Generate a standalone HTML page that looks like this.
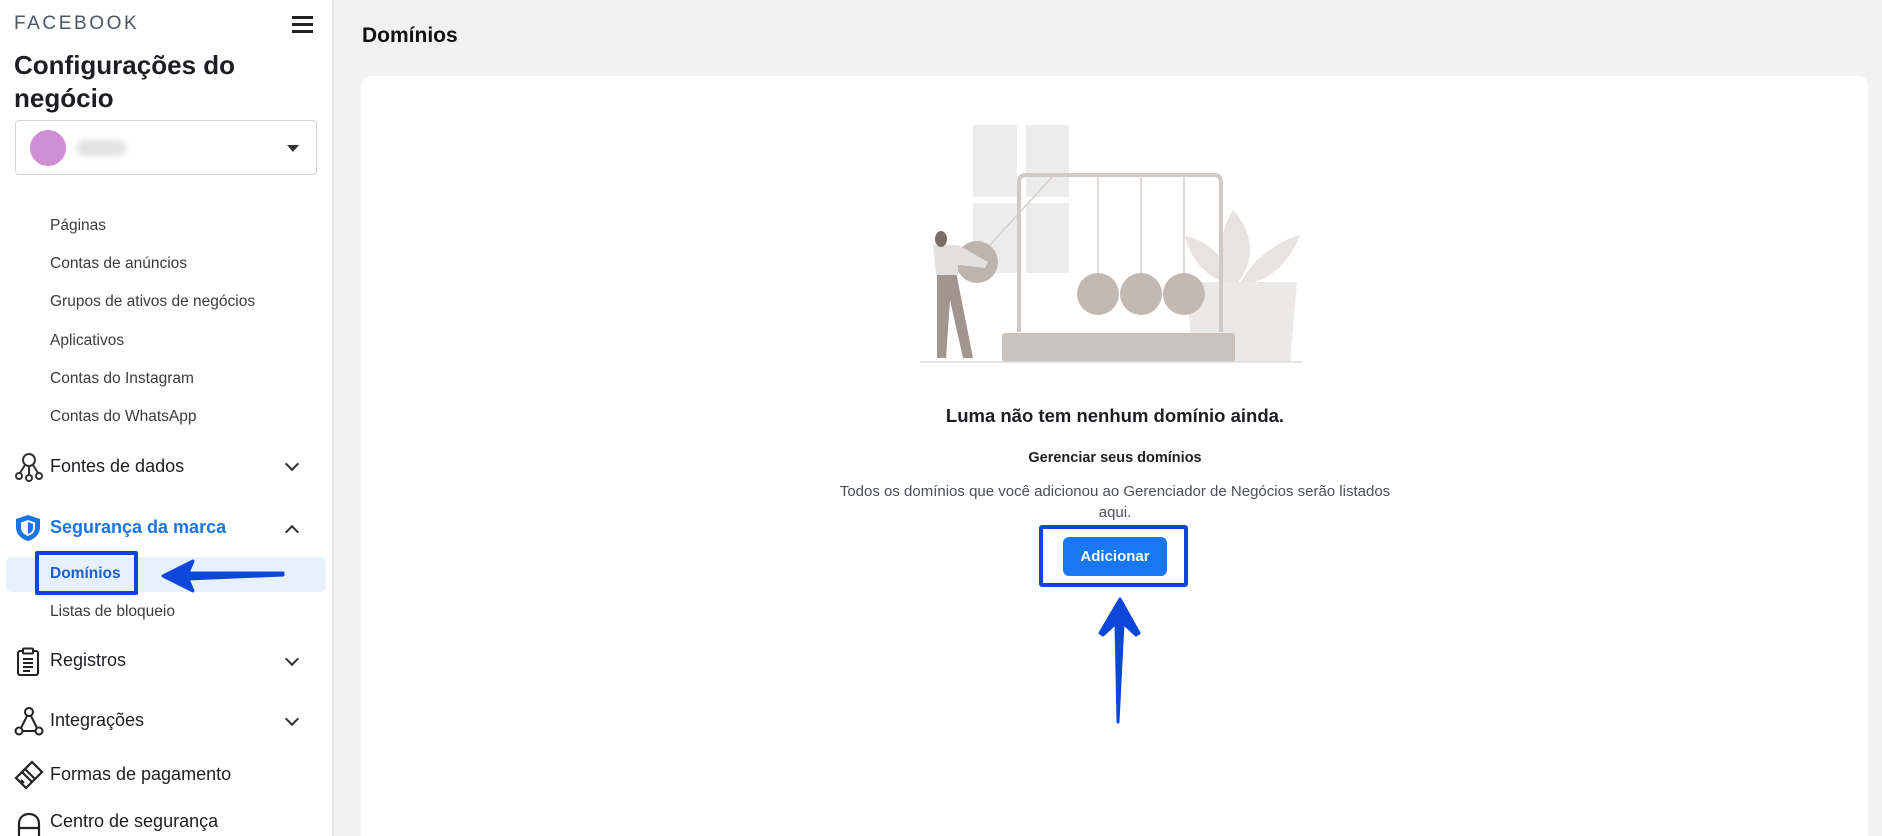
<!DOCTYPE html>
<html style="overflow:hidden;height:836px"><head><meta charset="utf-8"><style>
*{margin:0;padding:0;box-sizing:border-box}
body{width:1882px;height:836px;overflow:hidden;background:#f2f2f2;font-family:"Liberation Sans",Arial,sans-serif;position:relative;color:#1c1e21}
.side{position:absolute;left:0;top:0;width:334px;height:836px;background:#fff;border-right:2px solid #e4e4e4}
.a{position:absolute;white-space:nowrap}
.sub{left:50px;font-size:15.5px;color:#3a3b3c}
.main{left:50px;font-size:18px;color:#1c1e21}
.chev{position:absolute;left:287px;width:10px;height:10px;border-right:2.5px solid #333;border-bottom:2.5px solid #333;transform:rotate(45deg)}
.card{position:absolute;left:361px;top:76px;width:1507px;height:760px;background:#fff;border-radius:10px 10px 0 0}
</style></head><body>
<div class="side">
  <div class="a" style="left:14px;top:13px;font-size:19px;letter-spacing:2.6px;color:#4b5563">FACEBOOK</div>
  <div class="a" style="left:292px;top:16px;width:21px;height:2.5px;background:#222;box-shadow:0 7px 0 #222,0 14px 0 #222"></div>
  <div class="a" style="left:14px;top:49px;font-size:26px;font-weight:bold;line-height:33px;color:#1c1e21">Configurações do<br>negócio</div>
  <div class="a" style="left:15px;top:120px;width:302px;height:55px;border:1.5px solid #d4d4d4;border-radius:4px"></div>
  <div class="a" style="left:30px;top:130px;width:36px;height:36px;border-radius:50%;background:#cf8fd6"></div>
  <div class="a" style="left:76px;top:140px;width:50px;height:16px;border-radius:8px;background:#e3e3e3;filter:blur(3px)"></div>
  <div class="a" style="left:287px;top:145px;width:0;height:0;border-left:6px solid transparent;border-right:6px solid transparent;border-top:7px solid #333"></div>

  <div class="a sub" style="top:217px">Páginas</div>
  <div class="a sub" style="top:255px">Contas de anúncios</div>
  <div class="a sub" style="top:293px">Grupos de ativos de negócios</div>
  <div class="a sub" style="top:332px">Aplicativos</div>
  <div class="a sub" style="top:370px">Contas do Instagram</div>
  <div class="a sub" style="top:408px">Contas do WhatsApp</div>

  <svg class="a" style="left:14px;top:452px" width="30" height="30" viewBox="0 0 30 30" fill="none" stroke="#333" stroke-width="2"><circle cx="15" cy="8" r="6"/><circle cx="5" cy="24" r="3"/><circle cx="15" cy="26" r="3"/><circle cx="25" cy="24" r="3"/><path d="M11 13 L6 21 M15 14 V23 M19 13 L24 21"/></svg>
  <div class="a main" style="top:456px">Fontes de dados</div>
  <div class="chev" style="top:459px"></div>

  <svg class="a" style="left:14px;top:513px" width="28" height="30" viewBox="0 0 28 30"><path d="M14 2 L26 6 V14 C26 21 21 26 14 28 C7 26 2 21 2 14 V6 Z" fill="#1b74e4"/><path d="M14 7 L21 9.5 V14.5 C21 19 18 21.5 14 23 C10 21.5 7 19 7 14.5 V9.5 Z" fill="#fff"/><path d="M14 9 L19 11 V14.5 C19 18 17 20 14 21 Z" fill="#1b74e4"/></svg>
  <div class="a main" style="top:517px;color:#1b74e4;font-weight:bold">Segurança da marca</div>
  <div class="chev" style="top:527px;transform:rotate(-135deg);"></div>

  <div class="a" style="left:6px;top:557px;width:320px;height:35px;background:#e7f0fd;border-radius:6px"></div>
  <div class="a" style="left:35px;top:551px;width:103px;height:44px;border:4px solid #0d47d9;border-radius:2px"></div>
  <div class="a" style="left:50px;top:565px;font-size:15.5px;font-weight:bold;color:#1b5fc8">Domínios</div>
  <svg class="a" style="left:158px;top:556px" width="130" height="40" viewBox="0 0 130 40"><path d="M125 17 L30 17 L35 5 L5 20 L35 35 L30 23 L125 19 Z" fill="#0d47d9" stroke="#0d47d9" stroke-width="3" stroke-linejoin="round"/></svg>
  <div class="a sub" style="top:603px">Listas de bloqueio</div>

  <svg class="a" style="left:16px;top:647px" width="24" height="30" viewBox="0 0 24 30" fill="none" stroke="#222" stroke-width="2"><rect x="2" y="4" width="20" height="24" rx="2"/><rect x="7" y="1.5" width="10" height="5" rx="1" fill="#fff"/><path d="M7 12h10M7 16h10M7 20h10M7 24h7"/></svg>
  <div class="a main" style="top:650px">Registros</div>
  <div class="chev" style="top:654px"></div>

  <svg class="a" style="left:14px;top:706px" width="30" height="30" viewBox="0 0 30 30" fill="none" stroke="#222" stroke-width="2"><circle cx="15" cy="6" r="4"/><circle cx="5" cy="25" r="3.5"/><circle cx="25" cy="25" r="3.5"/><path d="M13 10 L7 22 M17 10 L23 22 M8.5 25 H21.5"/></svg>
  <div class="a main" style="top:710px">Integrações</div>
  <div class="chev" style="top:714px"></div>

  <svg class="a" style="left:14px;top:760px" width="30" height="30" viewBox="0 0 30 30" fill="none" stroke="#222" stroke-width="2.2"><path d="M18 2 L28 12 L12 28 L2 18 Z"/><path d="M8 12 L18 22 M11 9 L21 19" /><path d="M7 20 l3 3" /></svg>
  <div class="a main" style="top:764px">Formas de pagamento</div>

  <svg class="a" style="left:14px;top:808px" width="30" height="28" viewBox="0 0 30 28" fill="none" stroke="#222" stroke-width="2.2"><path d="M5 28 V16 C5 10 9 6 15 6 C21 6 25 10 25 16 V28 M5 20 H25"/></svg>
  <div class="a main" style="top:811px">Centro de segurança</div>
</div>

<div class="a" style="left:362px;top:24px;font-size:21px;font-weight:bold;color:#111">Domínios</div>
<div class="card"></div>

<svg class="a" style="left:900px;top:110px" width="420" height="260" viewBox="900 110 420 260">
  <g fill="#ececec">
    <rect x="973" y="125" width="44" height="72"/><rect x="1026" y="125" width="43" height="72"/>
    <rect x="973" y="203" width="44" height="70"/><rect x="1026" y="203" width="43" height="70"/>
  </g>
  <path d="M1233 210 C1260 240 1250 270 1235 285 C1220 265 1215 240 1233 210 Z" fill="#e6e3e0"/>
  <path d="M1185 236 C1210 240 1230 265 1235 285 C1210 282 1190 260 1185 236 Z" fill="#e6e3e0"/>
  <path d="M1300 235 C1280 240 1250 260 1240 285 C1270 282 1290 262 1300 235 Z" fill="#e6e3e0"/>
  <path d="M1187 282 H1297 L1290 362 H1192 Z" fill="#ebe9e7"/>
  <path d="M1019 332 V182 Q1019 175 1026 175 H1214 Q1221 175 1221 182 V332" fill="none" stroke="#cfcac6" stroke-width="4"/>
  <g stroke="#d6d0cc" stroke-width="1.5"><path d="M1098 177 V274 M1141 177 V274 M1184 177 V274"/><path d="M1052 177 L990 245"/></g>
  <g fill="#c3b9b3"><circle cx="1098" cy="294" r="21"/><circle cx="1141" cy="294" r="21"/><circle cx="1184" cy="294" r="21"/></g>
  <rect x="1002" y="333" width="233" height="29" rx="3" fill="#c9c1bc"/>
  <path d="M920 362 H1302" stroke="#ddd" stroke-width="1.5"/>
  <circle cx="977" cy="262" r="21" fill="#bdb4ae"/>
  <path d="M937 272 H956 L973 358 H963 L950 300 L946 358 H937 Z" fill="#a0958f"/>
  <path d="M933 245 H958 L988 262 L985 268 L958 265 V275 H936 Z" fill="#e4e0dd"/>
  <ellipse cx="941" cy="239" rx="6" ry="8" fill="#7a6e69"/>
</svg>

<div class="a" style="left:0;width:2230px;text-align:center;top:405px;font-size:18.5px;font-weight:bold;color:#1c1e21">Luma não tem nenhum domínio ainda.</div>
<div class="a" style="left:0;width:2230px;text-align:center;top:450px;font-size:14.5px;font-weight:bold;color:#1c1e21">Gerenciar seus domínios</div>
<div class="a" style="left:0;width:2230px;text-align:center;top:481px;font-size:15px;line-height:21px;color:#4b4f56">Todos os domínios que você adicionou ao Gerenciador de Negócios serão listados<br>aqui.</div>
<div class="a" style="left:1039px;top:525px;width:149px;height:62px;border:4px solid #0d47d9;border-radius:3px"></div>
<div class="a" style="left:1063px;top:537px;width:104px;height:39px;background:#1877f2;border-radius:6px;color:#fff;font-weight:bold;font-size:15px;text-align:center;line-height:39px">Adicionar</div>
<svg class="a" style="left:1095px;top:595px" width="50" height="130" viewBox="0 0 50 130"><path d="M25 4 L44 38 L41 40 L28 28 L23 127 L21 28 L8 40 L5 38 Z" fill="#0d47d9" stroke="#0d47d9" stroke-width="3" stroke-linejoin="round"/></svg>
</body></html>
